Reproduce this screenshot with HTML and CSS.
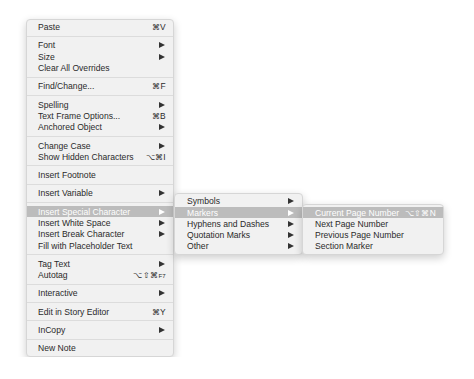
FILE: index.html
```html
<!DOCTYPE html>
<html lang="en">

<head>
    <meta charset="UTF-8">
    <title>Context Menu</title>
    <link rel="stylesheet" href="styles.css">
</head>

<body>
    <div class="stage">
        <div class="menu main-menu">
            <div class="item"><span>Paste</span><span class="key">⌘V</span></div>
            <div class="sep"></div>
            <div class="item"><span>Font</span><span class="arrow"></span></div>
            <div class="item"><span>Size</span><span class="arrow"></span></div>
            <div class="item"><span>Clear All Overrides</span></div>
            <div class="sep"></div>
            <div class="item"><span>Find/Change...</span><span class="key">⌘F</span></div>
            <div class="sep"></div>
            <div class="item"><span>Spelling</span><span class="arrow"></span></div>
            <div class="item"><span>Text Frame Options...</span><span class="key">⌘B</span></div>
            <div class="item"><span>Anchored Object</span><span class="arrow"></span></div>
            <div class="sep"></div>
            <div class="item"><span>Change Case</span><span class="arrow"></span></div>
            <div class="item"><span>Show Hidden Characters</span><span class="key">⌥⌘I</span></div>
            <div class="sep"></div>
            <div class="item"><span>Insert Footnote</span></div>
            <div class="sep"></div>
            <div class="item"><span>Insert Variable</span><span class="arrow"></span></div>
            <div class="sep"></div>
            <div class="item active"><span>Insert Special Character</span><span class="arrow"></span>
                <div class="menu sub-menu">
                    <div class="item"><span>Symbols</span><span class="arrow"></span></div>
                    <div class="item active"><span>Markers</span><span class="arrow"></span>
                        <div class="menu sub-menu-2">
                            <div class="item active"><span>Current Page Number</span><span class="key">⌥⇧⌘N</span></div>
                            <div class="item"><span>Next Page Number</span></div>
                            <div class="item"><span>Previous Page Number</span></div>
                            <div class="item"><span>Section Marker</span></div>
                        </div>
                    </div>
                    <div class="item"><span>Hyphens and Dashes</span><span class="arrow"></span></div>
                    <div class="item"><span>Quotation Marks</span><span class="arrow"></span></div>
                    <div class="item"><span>Other</span><span class="arrow"></span></div>
                </div>
            </div>
            <div class="item"><span>Insert White Space</span><span class="arrow"></span></div>
            <div class="item"><span>Insert Break Character</span><span class="arrow"></span></div>
            <div class="item"><span>Fill with Placeholder Text</span></div>
            <div class="sep"></div>
            <div class="item"><span>Tag Text</span><span class="arrow"></span></div>
            <div class="item"><span>Autotag</span><span class="key">⌥⇧⌘<small>F7</small></span></div>
            <div class="sep"></div>
            <div class="item"><span>Interactive</span><span class="arrow"></span></div>
            <div class="sep"></div>
            <div class="item"><span>Edit in Story Editor</span><span class="key">⌘Y</span></div>
            <div class="sep"></div>
            <div class="item"><span>InCopy</span><span class="arrow"></span></div>
            <div class="sep"></div>
            <div class="item"><span>New Note</span></div>
        </div>
    </div>
</body>

</html>
```

FILE: styles.css
```css
body {
    margin: 0;
    background: #ffffff;
    font-family: "Liberation Sans", Arial, sans-serif;
    font-size: 8.6px;
    color: #2a2a2a;
}

.stage {
    padding: 19px 0 0 26px;
}

.menu {
    background: #f1f1f1;
    border: 1px solid #d6d6d6;
    border-radius: 4px;
    box-shadow: 0 3px 9px rgba(0, 0, 0, 0.2);
    padding: 1.5px 0;
}

.main-menu {
    width: 146px;
}

.item {
    position: relative;
    display: flex;
    align-items: center;
    justify-content: space-between;
    height: 11.3px;
    padding: 0 7px 0 11px;
    white-space: nowrap;
}

.item.active {
    background: #bcbcbc;
}

.item.active > span {
    color: #ffffff;
}

.key {
    font-size: 8.4px;
    letter-spacing: 0.3px;
}

.key small {
    font-size: 6px;
}

.arrow {
    width: 0;
    height: 0;
    border-top: 3px solid transparent;
    border-bottom: 3px solid transparent;
    border-left: 6px solid #333333;
    margin-right: 1px;
}

.item.active > .arrow {
    border-left-color: #ffffff;
}

.sep {
    height: 1px;
    background: #dcdcdc;
    margin: 3px 0;
}

/* submenus overlay the main menu */
.sub-menu {
    position: absolute;
    left: 147px;
    top: -13.5px;
    width: 127px;
    padding: 2px 0;
}

.sub-menu .item {
    padding-left: 12px;
}

.sub-menu-2 {
    position: absolute;
    left: 127px;
    top: -2.5px;
    width: 140px;
}
```
